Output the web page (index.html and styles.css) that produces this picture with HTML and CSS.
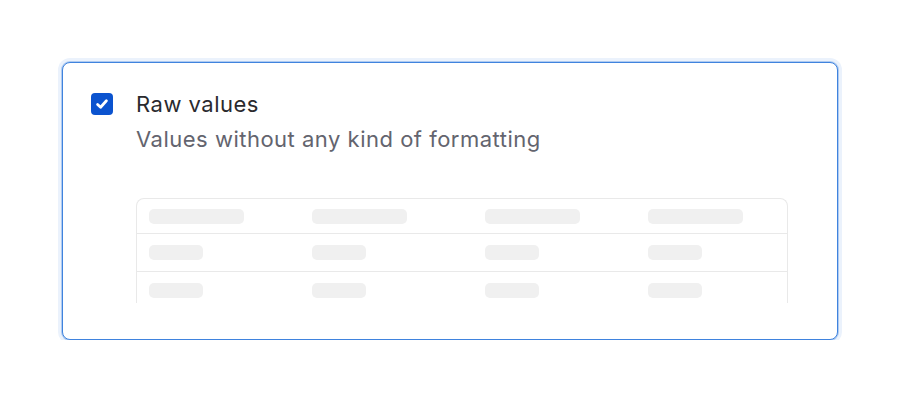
FILE: index.html
```html
<!DOCTYPE html>
<html>
<head>
<meta charset="utf-8">
<link rel="stylesheet" href="styles.css">
</head>
<body>
<div class="card">
  <div class="option">
    <span class="checkbox">
      <svg width="16" height="16" viewBox="0 0 16 16"><path d="M3.6 8.4 L6.6 11.2 L12.4 4.8" fill="none" stroke="#fff" stroke-width="2.8" stroke-linecap="round" stroke-linejoin="round"/></svg>
    </span>
    <div class="text">
      <div class="title">Raw values</div>
      <div class="desc">Values without any kind of formatting</div>
      <div class="preview">
        <div class="table">
          <div class="row head">
            <span class="bar long"></span><span class="bar long"></span><span class="bar long"></span><span class="bar long"></span>
          </div>
          <div class="row">
            <span class="bar"></span><span class="bar"></span><span class="bar"></span><span class="bar"></span>
          </div>
          <div class="row last">
            <span class="bar"></span><span class="bar"></span><span class="bar"></span><span class="bar"></span>
          </div>
        </div>
      </div>
    </div>
  </div>
</div>
</body>
</html>
```
FILE: styles.css
```css
html, body {
  margin: 0;
  padding: 0;
  background: #ffffff;
}
body {
  font-family: Inter, "Noto Sans", sans-serif;
  padding: 62px 62px 0 62px;
}
.card {
  box-sizing: border-box;
  width: 776px;
  height: 278px;
  border: 1px solid #3f83de;
  border-radius: 8px;
  box-shadow: 0 0 0 1px rgba(63, 131, 222, 0.35), 0 0 0 4px #ebf2fc;
  background: #fff;
  padding: 30px 28px 0 28px;
  overflow: hidden;
}
.option {
  display: flex;
  gap: 23px;
  align-items: flex-start;
}
.checkbox {
  flex: none;
  width: 22px;
  height: 22px;
  border-radius: 4px;
  background: #0b53cf;
  display: flex;
  align-items: center;
  justify-content: center;
}
.text {
  flex: 1;
}
.title {
  font-size: 22px;
  line-height: 24px;
  letter-spacing: 0.5px;
  color: #2a2a2e;
  margin-top: -1px;
}
.desc {
  font-size: 22px;
  line-height: 24px;
  letter-spacing: 0.5px;
  color: #63646e;
  margin-top: 11px;
}
.preview {
  margin-top: 47px;
  width: 652px;
  height: 105px;
  overflow: hidden;
}
.table {
  border: 1px solid #e9e9e9;
  border-radius: 8px 8px 0 0;
  border-bottom: none;
  height: 140px;
}
.row {
  display: grid;
  grid-template-columns: 163px 173px 163px 1fr;
  padding-left: 12px;
  height: 37px;
  align-items: center;
  border-bottom: 1px solid #e9e9e9;
}
.row.head {
  height: 34px;
}
.row.last {
  border-bottom: none;
}
.bar {
  display: block;
  width: 54px;
  height: 15px;
  border-radius: 5px;
  background: #f0f0f0;
}
.bar.long {
  width: 95px;
}
```
